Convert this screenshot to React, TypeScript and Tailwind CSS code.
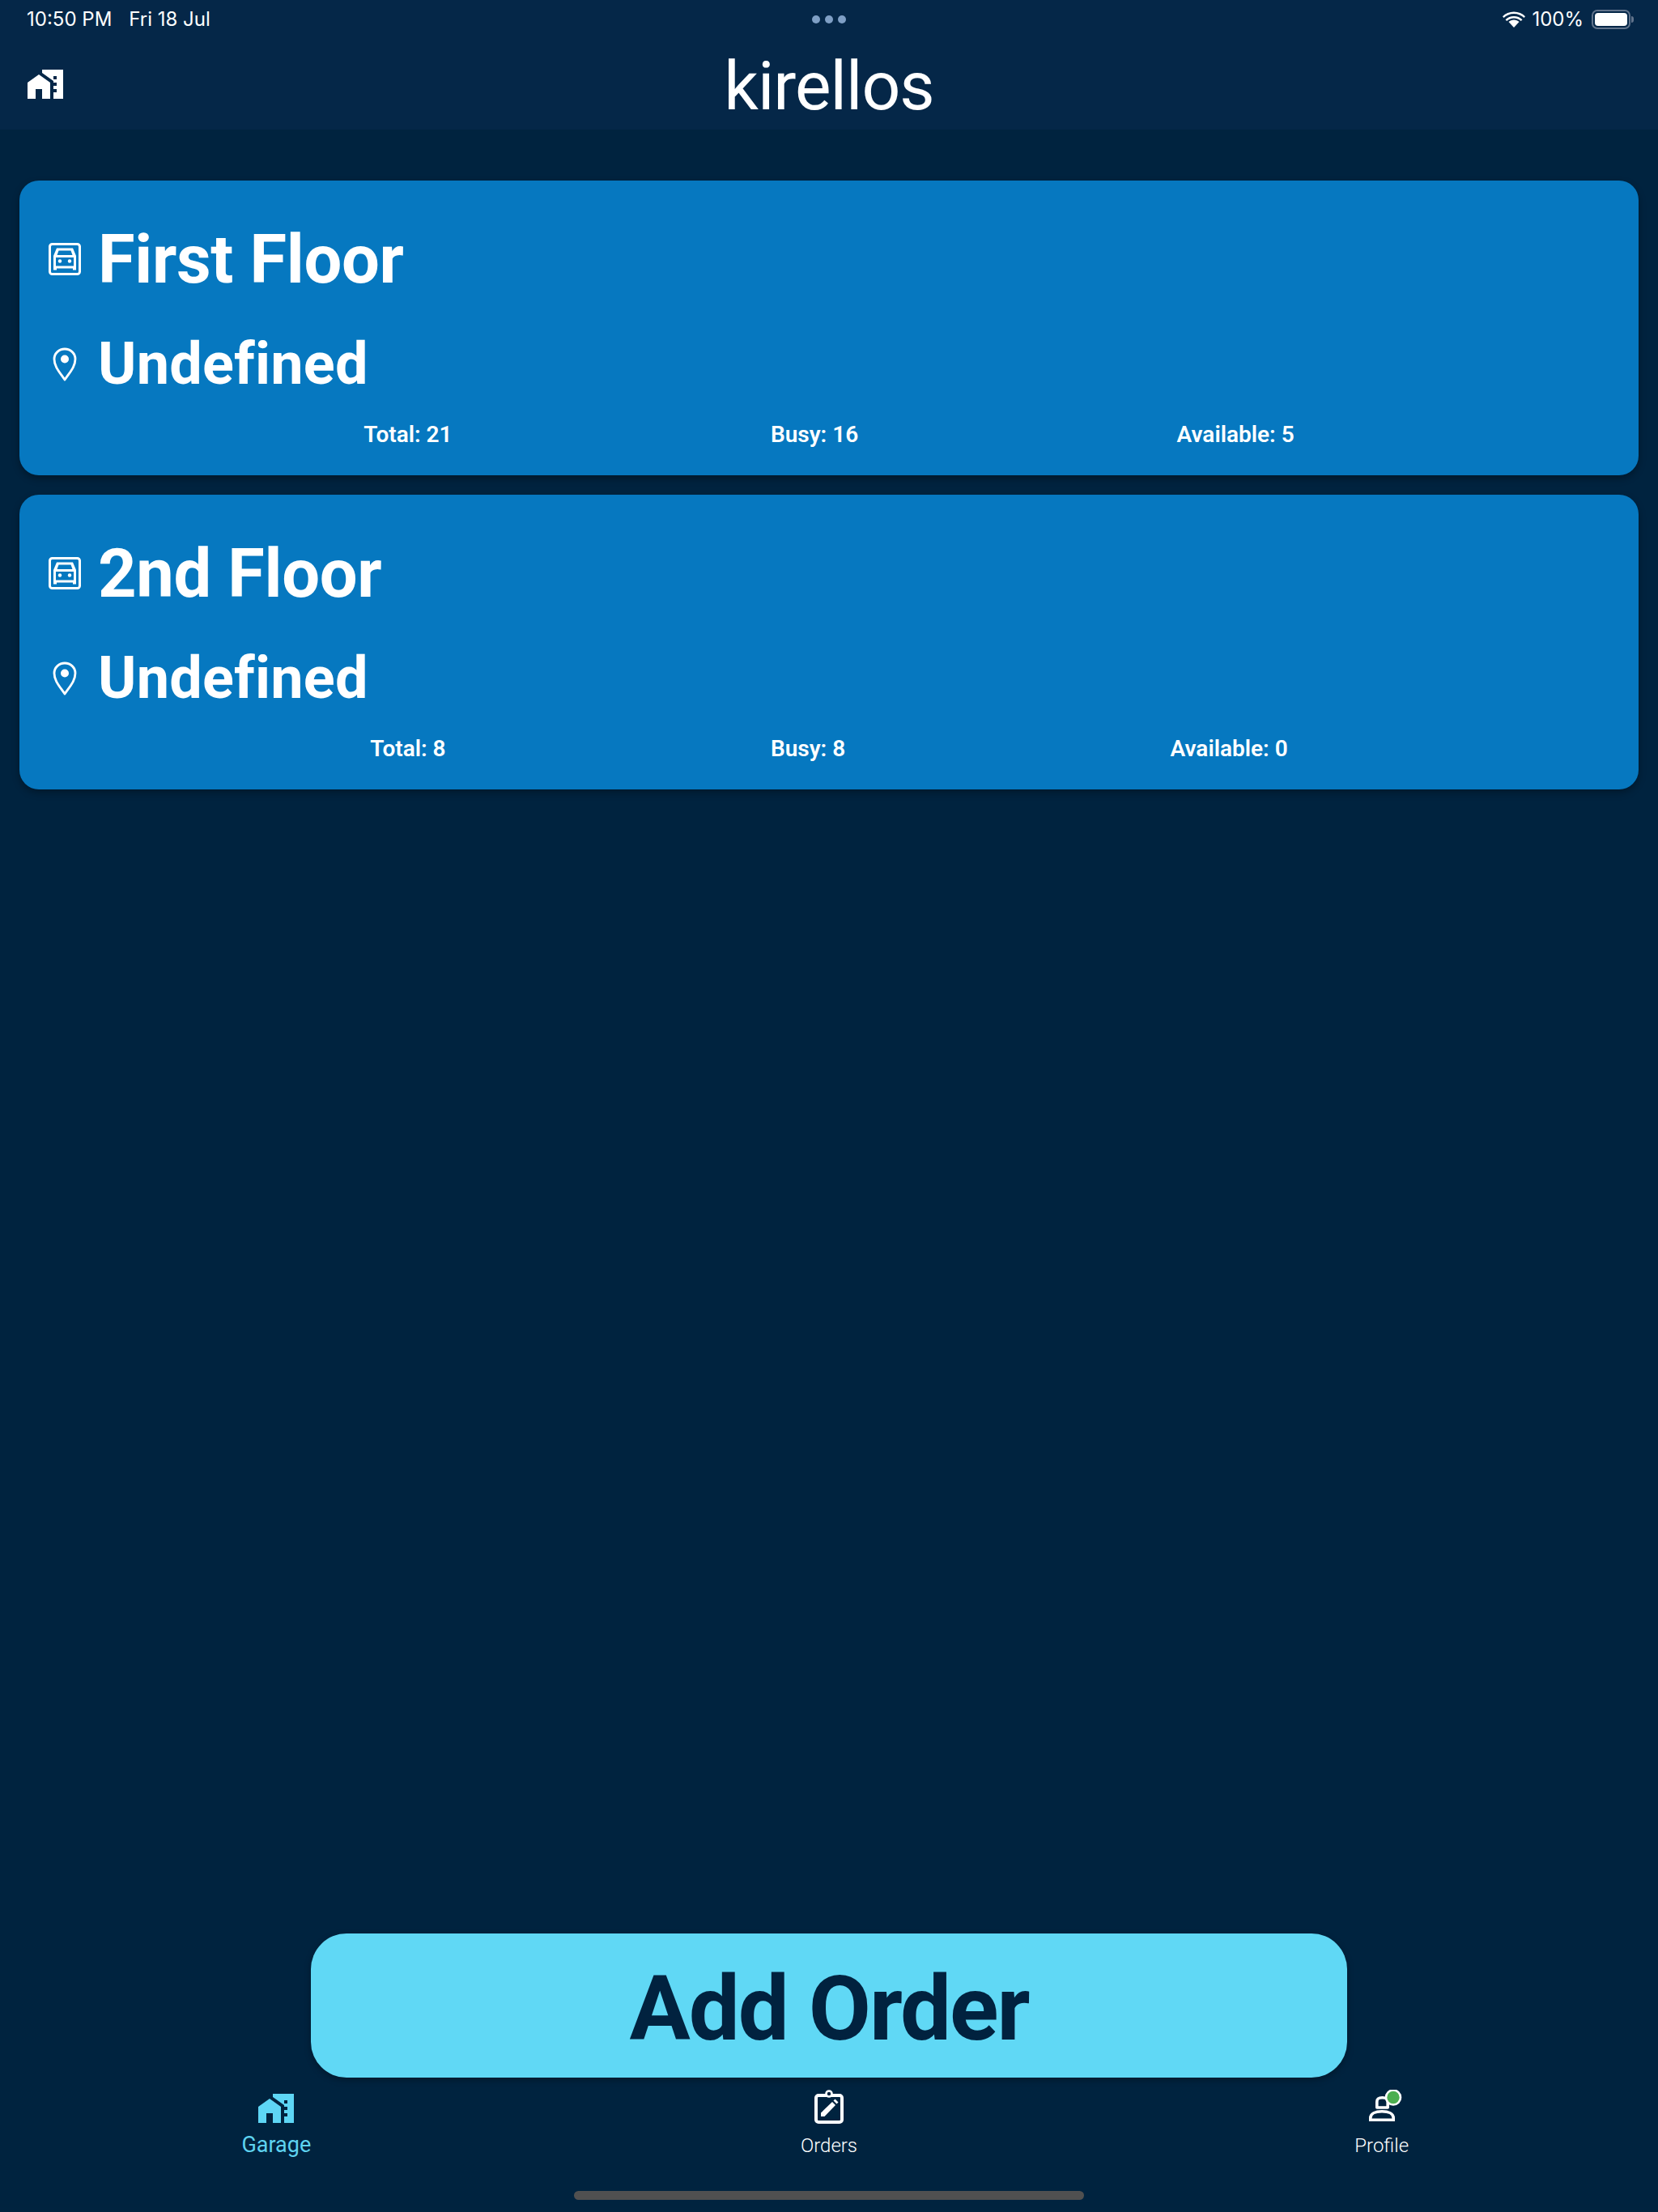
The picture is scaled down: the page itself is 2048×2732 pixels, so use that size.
import React from "react";
import { MdHomeWork } from "react-icons/md";

function GarageBox() {
  return (
    <svg width="40" height="40" viewBox="0 0 40 40" fill="none" className="shrink-0">
      <rect x="1.5" y="1.500" width="37" height="37" rx="3" stroke="white" strokeWidth="3" />
      <path fillRule="evenodd" clipRule="evenodd" fill="white" d="M10 6.500H30L34 16V33.500H30V31.500H10V33.500H6V16ZM12.500 9.500L10.500 15H29.500L27.500 9.500ZM9 18V28.500H31V18Z" />
      <circle cx="14" cy="22.500" r="2.200" fill="white" />
      <circle cx="26" cy="22.500" r="2.200" fill="white" />
    </svg>
  );
}

function Pin() {
  return (
    <svg width="40" height="42" viewBox="0 0 40 42" fill="none" className="shrink-0">
      <path d="M20 40C14 31 7 24 7 14.500C7 7.500 12.800 2 20 2C27.200 2 33 7.500 33 14.500C33 24 26 31 20 40Z" stroke="white" strokeWidth="2.800" strokeLinejoin="round" />
      <circle cx="20" cy="14.500" r="5" fill="white" />
    </svg>
  );
}

function Card({ title, total, busy, available }: { title: string; total: number; busy: number; available: number }) {
  return (
    <div className="h-[364px] rounded-[24px] bg-[#0678c0] shadow-[0_4px_10px_rgba(0,0,0,0.3)] flex flex-col">
      <div className="flex items-center h-[92px] mt-[51px] pl-[36px] gap-[21px]">
        <GarageBox />
        <span className="text-[83px] leading-[92px] relative top-[1px] font-bold text-white whitespace-nowrap tracking-[-0.3px]">{title}</span>
      </div>
      <div className="flex items-center h-[80px] mt-[44px] pl-[36px] gap-[21px]">
        <Pin />
        <span className="text-[72px] leading-[80px] font-bold text-white whitespace-nowrap tracking-[0.2px]">Undefined</span>
      </div>
      <div className="flex justify-evenly px-8 mt-[29px] text-[28px] leading-[36px] font-semibold text-white">
        <span>Total: {total}</span>
        <span>Busy: {busy}</span>
        <span>Available: {available}</span>
      </div>
    </div>
  );
}

function OrdersIcon() {
  return (
    <svg width="40" height="42" viewBox="0 0 40 42" fill="none">
      <rect x="4" y="7" width="32" height="33" rx="3" stroke="white" strokeWidth="4" />
      <circle cx="20" cy="5" r="3.500" stroke="white" strokeWidth="2.600" fill="#00233f" />
      <path d="M10 33V28.500L24 15L28 19L14.500 33Z" fill="white" />
      <path d="M25.500 13.500L27.500 11.500L31.500 15.500L29.500 17.500Z" fill="white" />
    </svg>
  );
}

function ProfileIcon() {
  return (
    <svg width="52" height="44" viewBox="0 0 52 44" fill="none">
      <path d="M19.800 22V15C19.800 11 22 9.800 26.500 9.800C31 9.800 33.200 11 33.200 15V22Z" stroke="white" strokeWidth="3.600" strokeLinejoin="round" />
      <path d="M11.800 37.200V35C11.800 29.500 18 26.800 26 26.800C34 26.800 40.200 29.500 40.200 35V37.200Z" stroke="white" strokeWidth="3.600" />
      <circle cx="40" cy="9.500" r="9" fill="#4caf50" stroke="white" strokeWidth="2.600" />
    </svg>
  );
}

export default function App() {
  return (
    <div className="h-[2732px] w-[2048px] bg-[#00233f] flex flex-col font-['Roboto',sans-serif] overflow-hidden">
      <div className="bg-[#052748] h-[160px] shrink-0 flex flex-col">
        <div className="h-[46px] relative flex items-center justify-between pl-[33px] pr-[30px] pt-[2px] text-white text-[24px] font-['Inter',sans-serif] font-normal">
          <div className="flex gap-[21px]">
            <span>10:50 PM</span>
            <span>Fri 18 Jul</span>
          </div>
          <div className="flex items-center gap-[8px]">
            <svg width="28" height="22" viewBox="0 0 28 22" fill="white">
              <path d="M14 4C9 4 4.500 6 1.500 9L0 7.300C3.500 3.700 8.500 1.500 14 1.500C19.500 1.500 24.500 3.700 28 7.300L26.500 9C23.500 6 19 4 14 4Z" />
              <path d="M14 9.500C10.500 9.500 7.500 10.800 5.300 13L3.500 11.200C6.200 8.500 9.900 7 14 7C18.100 7 21.800 8.500 24.500 11.200L22.700 13C20.500 10.800 17.500 9.500 14 9.500Z" />
              <path d="M14 11.500C11.500 11.500 9.200 12.500 7.500 14.100L14 21L20.500 14.100C18.800 12.500 16.500 11.500 14 11.500Z" />
            </svg>
            <span>100%</span>
            <div className="flex items-center ml-[2px]">
              <div className="w-[48px] h-[24px] rounded-[7px] border-2 border-[#62748c] p-[2px]">
                <div className="w-full h-full rounded-[4px] bg-white" />
              </div>
              <div className="w-[3px] h-[8px] rounded-r-[3px] bg-[#62748c] ml-[1px]" />
            </div>
          </div>
          <div className="absolute left-[1003px] top-[19px] flex gap-[6px]">
            <div className="w-[10px] h-[10px] rounded-full bg-[#7f9fc5]" />
            <div className="w-[10px] h-[10px] rounded-full bg-[#7f9fc5]" />
            <div className="w-[10px] h-[10px] rounded-full bg-[#7f9fc5]" />
          </div>
        </div>
        <div className="relative flex-1 flex items-center justify-center">
          <MdHomeWork size={48} color="white" className="absolute left-[32px] top-[34px]" />
          <span className="text-[84px] leading-[90px] text-white tracking-[-1px] mt-[8px]">kirellos</span>
        </div>
      </div>

      <div className="flex flex-col gap-[24px] px-6 pt-[63px]">
        <Card title="First Floor" total={21} busy={16} available={5} />
        <Card title="2nd Floor" total={8} busy={8} available={0} />
      </div>

      <div className="flex-1" />

      <button className="self-center w-[1280px] h-[178px] rounded-[44px] bg-[#60d8f5] text-[#01223f] text-[112px] font-bold tracking-[-2px] pt-[8px] shadow-[0_3px_8px_rgba(0,0,0,0.3)]">
        Add Order
      </button>

      <div className="h-[166px] flex flex-col shrink-0">
        <div className="grid grid-cols-3 h-[140px]">
          <div className="flex flex-col items-center pt-[14px]">
            <MdHomeWork size={48} color="#5ed6f5" />
            <span className="text-[27px] leading-[36px] text-[#5ed3f0] mt-[3px] font-normal">Garage</span>
          </div>
          <div className="flex flex-col items-center pt-[15px]">
            <OrdersIcon />
            <span className="text-[24px] leading-[32px] text-white mt-[11px] font-light">Orders</span>
          </div>
          <div className="flex flex-col items-center pt-[15px]">
            <ProfileIcon />
            <span className="text-[24px] leading-[32px] text-white mt-[9px] font-light">Profile</span>
          </div>
        </div>
        <div className="self-center w-[630px] h-[11px] rounded-full bg-[#505050]" />
      </div>
    </div>
  );
}
